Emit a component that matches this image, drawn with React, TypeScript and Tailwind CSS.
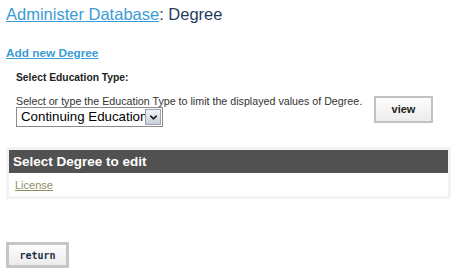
import { ChevronDown } from 'lucide-react'

export default function App() {
  return (
    <div className="w-[456px] h-[274px] bg-white px-[6px] pt-[3px] font-['Liberation_Sans',Arial,sans-serif] text-[#333]">
      {/* Title */}
      <h1 className="text-[16.5px] leading-[22px] text-[#1f3b5e]">
        <a href="#" className="text-[#3a9bd5] underline">Administer Database</a>: Degree
      </h1>

      <div className="mt-[20px] leading-[14px]">
        <a href="#" className="text-[11.8px] font-bold text-[#3a9bd5] underline">
          Add new Degree
        </a>
      </div>

      {/* Filter */}
      <div className="pl-[10px] mt-[12px]">
        <p className="text-[10.3px] font-bold leading-[12px] text-[#222]">Select Education Type:</p>
        <div className="flex items-start mt-[11px]">
          <div className="flex flex-col w-[358px]">
            <p className="text-[10.7px] leading-[12px] text-[#333] whitespace-nowrap">
              Select or type the Education Type to limit the displayed values of Degree.
            </p>
            <div className="relative w-[147px] h-[20px] border border-[#8a8a8a] bg-white overflow-hidden">
              <span className="block pl-[4px] text-[13.3px] leading-[18px] text-black whitespace-nowrap">
                Continuing Education
              </span>
              <span className="absolute right-[1px] top-[1px] w-[16px] h-[16px] border border-[#9aa3b5] bg-gradient-to-b from-[#f2f4f8] to-[#c9cfdb] flex items-center justify-center">
                <ChevronDown className="w-[11px] h-[11px] text-[#222]" strokeWidth={3.5} />
              </span>
            </div>
          </div>
          <button className="mt-[1px] w-[59px] h-[27px] border-2 border-[#c2c2c2] bg-gradient-to-b from-[#fdfdfd] to-[#ececec] text-[11px] font-bold text-[#222]">
            view
          </button>
        </div>
      </div>

      {/* Degree list */}
      <div className="mt-[20px] w-[445px] bg-[#f3f3f3] p-[3px]">
        <div className="h-[23px] bg-[#515151] px-[4px] flex items-center">
          <span className="text-[13.5px] font-bold text-white leading-[18px]">Select Degree to edit</span>
        </div>
        <div className="bg-white h-[23px] px-[6px] flex items-center">
          <a href="#" className="text-[11px] text-[#8d8d63] underline leading-[12px]">License</a>
        </div>
      </div>

      <button className="mt-[43px] w-[63px] h-[26px] border-[3px] border-[#c6c6c6] bg-gradient-to-b from-[#fdfdfd] to-[#ececec] font-['DejaVu_Sans_Mono',monospace] text-[10px] font-bold text-[#1f2f45]">
        return
      </button>
    </div>
  )
}
